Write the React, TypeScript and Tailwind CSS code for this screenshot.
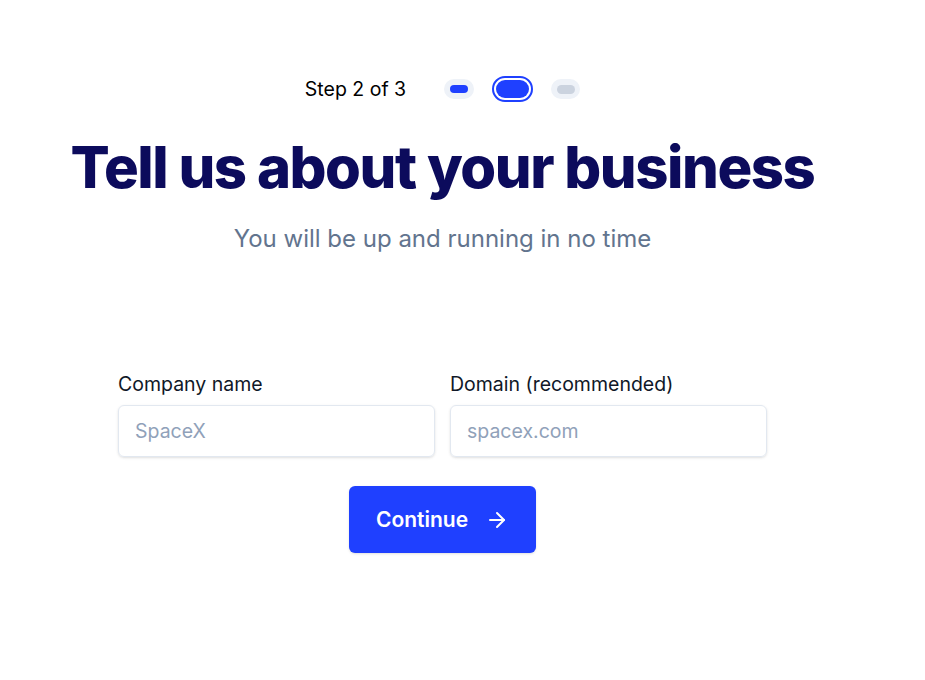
import React from 'react';
import { ArrowRight } from 'lucide-react';

const StepDots: React.FC = () => (
  <div className="flex items-center gap-[18px]">
    <div className="w-[30px] h-5 rounded-full bg-[#eef2f8] flex items-center justify-center">
      <div className="w-[18px] h-2 rounded-full bg-[#1f40ff]"></div>
    </div>
    <div className="w-[41px] h-[26px] rounded-full border-2 border-[#1f40ff] bg-white p-[2px]">
      <div className="w-full h-full rounded-full bg-[#1f40ff]"></div>
    </div>
    <div className="w-[29px] h-5 rounded-full bg-[#eef2f8] flex items-center justify-center">
      <div className="w-[18px] h-[9px] rounded-full bg-[#cbd3df]"></div>
    </div>
  </div>
);

export default function App() {
  return (
    <div className="min-h-screen bg-white" style={{ fontFamily: 'Inter, "Noto Sans", sans-serif' }}>
      <div className="w-[885px] flex flex-col items-center pt-[75px]">
        <div className="flex items-center gap-[38px]">
          <span className="text-[19.5px] leading-7 text-black">Step 2 of 3</span>
          <StepDots />
        </div>

        <h1 className="mt-[35px] text-[58px] leading-none font-extrabold tracking-tight text-[#0c0b5c]">
          Tell us about your business
        </h1>
        <p className="mt-[27px] text-2xl text-slate-500">You will be up and running in no time</p>

        <div className="mt-[115px] flex gap-[15px]">
          <div className="flex flex-col">
            <label className="mb-[7px] text-[19.5px] leading-7 text-gray-900">Company name</label>
            <input
              className="w-[317px] h-[52px] px-4 rounded-md border border-slate-200 shadow-sm text-[19.5px] placeholder:text-slate-400 outline-none"
              placeholder="SpaceX"
            />
          </div>
          <div className="flex flex-col">
            <label className="mb-[7px] text-[19.5px] leading-7 text-gray-900">Domain (recommended)</label>
            <input
              className="w-[317px] h-[52px] px-4 rounded-md border border-slate-200 shadow-sm text-[19.5px] placeholder:text-slate-400 outline-none"
              placeholder="spacex.com"
            />
          </div>
        </div>

        <button className="mt-[29px] w-[187px] h-[67px] rounded-md bg-[#1f40ff] text-white text-[21px] font-semibold flex items-center justify-center gap-[17px] shadow-sm">
          Continue
          <ArrowRight size={24} strokeWidth={2} />
        </button>
      </div>
    </div>
  );
}
